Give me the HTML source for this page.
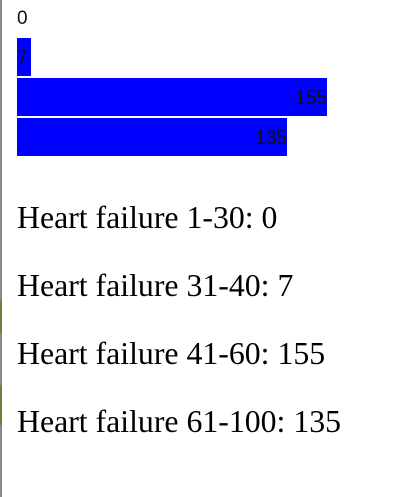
<!DOCTYPE html>
<html><head><style>
html,body{margin:0;padding:0;background:#fff;width:417px;height:497px;overflow:hidden}
.bl{position:absolute;left:0;top:0;width:2px;height:497px;background:#8a8a8a}
.t{position:absolute;font-family:"Liberation Sans",Arial,sans-serif;font-size:19px;color:#111;line-height:18px}
.bar{position:absolute;left:17px;background:#0000ff;height:38px;font-family:"Liberation Sans",Arial,sans-serif;font-size:19px;color:#111;text-align:right;line-height:18px;box-sizing:border-box;padding-top:12px;white-space:nowrap}
.h{position:absolute;left:17px;font-family:"Liberation Serif","Times New Roman",serif;font-size:31.8px;color:#000;line-height:30px;white-space:nowrap}
</style></head><body>
<div class="bl"></div>
<div style="position:absolute;left:0;top:300px;width:2px;height:33px;background:#7a7a40"></div>
<div style="position:absolute;left:0;top:385px;width:2px;height:40px;background:#7a7a40"></div>
<div class="t" style="left:17px;top:10px">0</div>
<div class="bar" style="top:38px;width:14px;text-align:left">7</div>
<div class="bar" style="top:78px;width:310px">155</div>
<div class="bar" style="top:118px;width:270px">135</div>
<div class="h" style="top:203px">Heart failure 1-30: 0</div>
<div class="h" style="top:271px">Heart failure 31-40: 7</div>
<div class="h" style="top:339px">Heart failure 41-60: 155</div>
<div class="h" style="top:407px">Heart failure 61-100: 135</div>
</body></html>
